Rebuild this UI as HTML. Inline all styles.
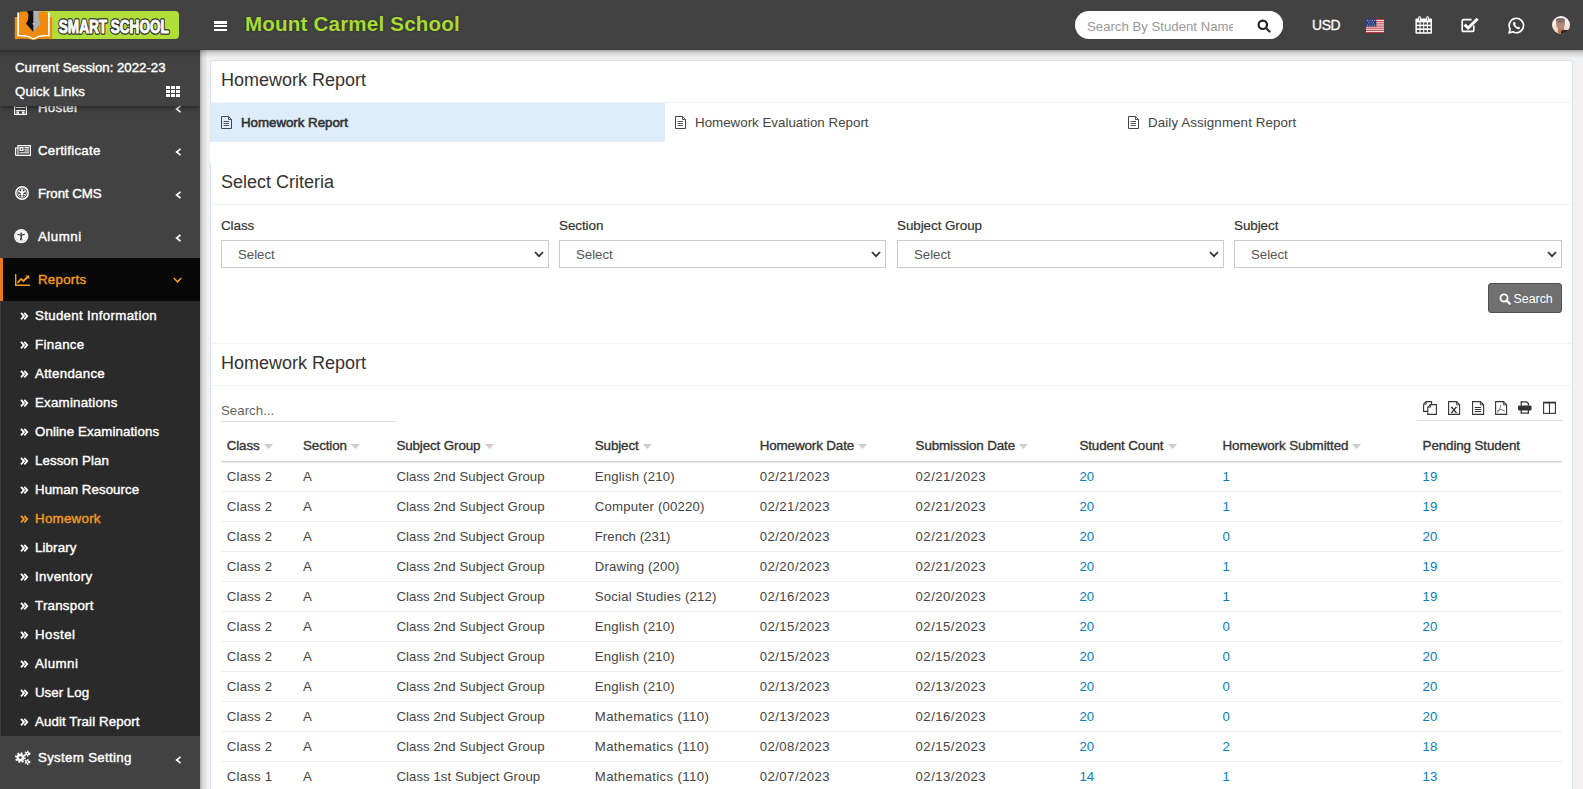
<!DOCTYPE html>
<html><head><meta charset="utf-8">
<style>
*{box-sizing:border-box;margin:0;padding:0}
html,body{width:1583px;height:789px;overflow:hidden}
body{background:#f1f1f1;font-family:"Liberation Sans",sans-serif;color:#444;position:relative}
.abs{position:absolute}
.t{position:absolute;white-space:nowrap}
svg{position:absolute;display:block;overflow:visible}
#hdr{position:absolute;left:0;top:0;width:1583px;height:50px;background:#424242;z-index:20}
#hdrsh{position:absolute;left:0;top:50px;width:1583px;height:8px;background:linear-gradient(rgba(0,0,0,.32),rgba(0,0,0,.12) 35%,rgba(0,0,0,0));z-index:19}
#side{position:absolute;left:0;top:50px;width:200px;height:739px;background:#424242;z-index:10;overflow:hidden}
#sdsh{position:absolute;left:200px;top:50px;width:8px;height:739px;background:linear-gradient(90deg,rgba(0,0,0,.28),rgba(0,0,0,.1) 35%,rgba(0,0,0,0));z-index:9}
#box{position:absolute;left:210px;top:60px;width:1363px;height:760px;background:#fff;border:1px solid #dbe3ec;border-radius:3px;z-index:1}
</style></head>
<body>
<div id="hdr">
<div class="abs" style="left:28px;top:11px;width:151px;height:28px;background:#b0dd3a;border-radius:4px;"></div>
<svg style="left:14px;top:10px" width="40" height="31" viewBox="0 0 40 31">
<path d="M0.8 7 H4 V26 H35 V7 H38.2 V29.2 Q28 27.8 19.5 30 Q10 27.8 0.8 29.2 Z" fill="#f28a0c"/>
<path d="M3.3 2.5 H5 V25 Q13 24 19.5 28 Q26 24 34 25 V2.5 H35.7 V26.5 Q27 25.5 19.5 29.6 Q12 25.5 3.3 26.5 Z" fill="#fff"/>
<path d="M5 3.5 Q5 1.5 8 1.5 H19.5 V28 Q13 24 5 25 Z" fill="#f28a0c"/>
<path d="M34 3.5 Q34 1.5 31 1.5 H19.5 V28 Q26 24 34 25 Z" fill="#f28a0c"/>
<path d="M13 1 H19.5 V22.5 L18.5 21 Q15 17 12 13.8 Q14.8 10 14.5 5 Z" fill="#111"/>
<path d="M19.5 1 H25.7 Q24.3 5 24.6 8 Q25.5 11 26.6 13.8 Q23 17 20.5 21 L19.5 22.5 Z" fill="#a9b1b5"/>
<path d="M19.5 4 V22" stroke="#6f7679" stroke-width="0.6"/>
<circle cx="19.5" cy="13.8" r="0.9" fill="#ddd"/>
</svg>
<svg style="left:57px;top:14px" width="118" height="22" viewBox="0 0 118 22"><text x="1.8" y="18.5" font-family="Liberation Sans" font-weight="bold" font-size="17.5" fill="#fff" stroke="#2e2e2e" stroke-width="3.4" stroke-linejoin="round" textLength="110" lengthAdjust="spacingAndGlyphs">SMART SCHOOL</text><text x="1.8" y="18.5" font-family="Liberation Sans" font-weight="bold" font-size="17.5" fill="#fff" stroke="#fff" stroke-width="0.9" stroke-linejoin="round" textLength="110" lengthAdjust="spacingAndGlyphs">SMART SCHOOL</text></svg>
<div class="abs" style="left:214px;top:21.4px;width:13px;height:2.3px;background:#fff;"></div>
<div class="abs" style="left:214px;top:25.2px;width:13px;height:2.3px;background:#fff;"></div>
<div class="abs" style="left:214px;top:29px;width:13px;height:2.3px;background:#fff;"></div>
<div class="t" style="left:245px;top:10.36px;font-size:20.6px;line-height:27px;color:#a8dc34;font-weight:bold;letter-spacing:0.17px;text-shadow:0 0 2px rgba(0,0,0,.5);">Mount Carmel School</div>
<div class="abs" style="left:1075px;top:11px;width:208px;height:28px;background:#fff;border-radius:14px;overflow:hidden">
<div class="t" style="left:12px;top:6.62px;font-size:13.2px;line-height:17px;color:#999;letter-spacing:0px;">Search By Student Name</div>
<div class="abs" style="left:158px;top:0px;width:50px;height:28px;background:#fff;"></div>
<svg style="left:182px;top:8px" width="14" height="14" viewBox="0 0 14 14"><circle cx="5.8" cy="5.8" r="4.2" fill="none" stroke="#222" stroke-width="2.2"/><path d="M9 9 L12.5 12.5" stroke="#333" stroke-width="2.4" stroke-linecap="round"/></svg>
</div>
<div class="t" style="left:1312px;top:16.38px;font-size:13.9px;line-height:18px;color:#fff;-webkit-text-stroke:0.3px #fff;letter-spacing:-0.35px;">USD</div>
<svg style="left:1366px;top:19px" width="18" height="14" viewBox="0 0 18 14">
<rect width="18" height="14" fill="#f2f2f2"/>
<g fill="#c23a42"><rect y="0" width="18" height="1.1"/><rect y="2.15" width="18" height="1.1"/><rect y="4.3" width="18" height="1.1"/><rect y="6.45" width="18" height="1.1"/><rect y="8.6" width="18" height="1.1"/><rect y="10.75" width="18" height="1.1"/><rect y="12.9" width="18" height="1.1"/></g>
<rect width="10.3" height="7.6" fill="#2c3f7c"/>
<g fill="#c9cfe0"><circle cx="1.5" cy="1.4" r="0.5"/><circle cx="3.9" cy="1.4" r="0.5"/><circle cx="6.3" cy="1.4" r="0.5"/><circle cx="8.7" cy="1.4" r="0.5"/><circle cx="2.7" cy="3.8" r="0.5"/><circle cx="5.1" cy="3.8" r="0.5"/><circle cx="7.5" cy="3.8" r="0.5"/><circle cx="1.5" cy="6.1" r="0.5"/><circle cx="3.9" cy="6.1" r="0.5"/><circle cx="6.3" cy="6.1" r="0.5"/><circle cx="8.7" cy="6.1" r="0.5"/></g>
</svg>
<svg style="left:1415px;top:16px" width="18" height="18" viewBox="0 0 18 18">
<rect x="0.4" y="2.6" width="16.6" height="15.2" rx="1" fill="#fff"/>
<g fill="#424242"><rect x="1.9" y="6.4" width="2.6" height="2.2"/><rect x="5.6" y="6.4" width="2.6" height="2.2"/><rect x="9.2" y="6.4" width="2.6" height="2.2"/><rect x="12.9" y="6.4" width="2.6" height="2.2"/>
<rect x="1.9" y="10.2" width="2.6" height="2.2"/><rect x="5.6" y="10.2" width="2.6" height="2.2"/><rect x="9.2" y="10.2" width="2.6" height="2.2"/><rect x="12.9" y="10.2" width="2.6" height="2.2"/>
<rect x="1.9" y="14" width="2.6" height="2.2"/><rect x="5.6" y="14" width="2.6" height="2.2"/><rect x="9.2" y="14" width="2.6" height="2.2"/><rect x="12.9" y="14" width="2.6" height="2.2"/></g>
<rect x="3.2" y="0.3" width="2.8" height="4.6" rx="1.4" fill="#fff"/><rect x="11.2" y="0.3" width="2.8" height="4.6" rx="1.4" fill="#fff"/>
<rect x="4.1" y="1.5" width="1" height="3" fill="#666"/><rect x="12.1" y="1.5" width="1" height="3" fill="#666"/>
</svg>
<svg style="left:1461px;top:17px" width="19" height="16" viewBox="0 0 19 16">
<path d="M12.8 8.5 V13 Q12.8 14.4 11.4 14.4 H2.6 Q1.2 14.4 1.2 13 V4 Q1.2 2.6 2.6 2.6 H10.5" fill="none" stroke="#fff" stroke-width="1.7"/>
<path d="M3.6 7.6 L7.2 11 L16.6 1.8" fill="none" stroke="#fff" stroke-width="3"/>
</svg>
<svg style="left:1508px;top:17px" width="17" height="17" viewBox="0 0 17 17">
<path d="M1 16 L2.2 12.3 A7.2 7.2 0 1 1 4.8 14.8 Z" fill="none" stroke="#fff" stroke-width="1.6" stroke-linejoin="round"/>
<path d="M5.6 5.2 Q6.3 4.4 6.9 5 L7.6 6.6 Q7.7 7.1 7.1 7.6 Q8 9.4 9.6 10.2 Q10.1 9.6 10.6 9.7 L12 10.4 Q12.4 11 11.6 11.8 Q10.6 12.6 8.6 11.5 Q5.8 9.8 5 7.3 Q4.8 6 5.6 5.2 Z" fill="#fff"/>
</svg>
<div class="abs" style="left:1552px;top:15.8px;width:18.4px;height:18.4px;border-radius:50%;overflow:hidden;background:linear-gradient(#fbfafa,#f7ece6 45%,#f0cfc8 80%,#c9dbe6)">
<div class="abs" style="left:6px;top:12px;width:6px;height:7px;background:#b07a58"></div>
<div class="abs" style="left:9px;top:14px;width:10px;height:6px;border-radius:40% 30% 0 0;background:#2a2220"></div>
<div class="abs" style="left:4.3px;top:2.6px;width:8.6px;height:11px;border-radius:45% 45% 48% 48%;background:#b48b7a"></div>
<div class="abs" style="left:4.3px;top:2.4px;width:8.6px;height:3.6px;border-radius:50% 50% 20% 20%;background:#857470"></div>
<div class="abs" style="left:5.5px;top:6.5px;width:6px;height:1.2px;background:#8a6455;opacity:.6"></div>
</div>
</div>
<div id="hdrsh"></div>
<div id="side">
<div class="t" style="left:38px;top:48.89px;font-size:13.3px;line-height:17px;color:#fff;-webkit-text-stroke:0.4px #fff;letter-spacing:0.25px;">Hostel</div>
<svg style="left:175px;top:55px" width="7" height="8" viewBox="0 0 7 8"><path d="M5.5 0.8 L1.6 4 L5.5 7.2" fill="none" stroke="#fff" stroke-width="1.7"/></svg>
<div class="t" style="left:38px;top:91.89px;font-size:13.3px;line-height:17px;color:#fff;-webkit-text-stroke:0.4px #fff;letter-spacing:0.25px;">Certificate</div>
<svg style="left:175px;top:98px" width="7" height="8" viewBox="0 0 7 8"><path d="M5.5 0.8 L1.6 4 L5.5 7.2" fill="none" stroke="#fff" stroke-width="1.7"/></svg>
<div class="t" style="left:38px;top:134.89px;font-size:13.3px;line-height:17px;color:#fff;-webkit-text-stroke:0.4px #fff;letter-spacing:-0.09000000000000002px;">Front CMS</div>
<svg style="left:175px;top:141px" width="7" height="8" viewBox="0 0 7 8"><path d="M5.5 0.8 L1.6 4 L5.5 7.2" fill="none" stroke="#fff" stroke-width="1.7"/></svg>
<div class="t" style="left:38px;top:177.89px;font-size:13.3px;line-height:17px;color:#fff;-webkit-text-stroke:0.4px #fff;letter-spacing:0.49px;">Alumni</div>
<svg style="left:175px;top:184px" width="7" height="8" viewBox="0 0 7 8"><path d="M5.5 0.8 L1.6 4 L5.5 7.2" fill="none" stroke="#fff" stroke-width="1.7"/></svg>
<svg style="left:14px;top:56px" width="13" height="9" viewBox="0 0 13 9"><rect x="0.6" y="-6" width="11.8" height="14.4" fill="none" stroke="#fff" stroke-width="1.2"/><rect x="2" y="4" width="9" height="1.2" fill="#fff"/><rect x="2.5" y="5.5" width="2.5" height="2.2" fill="#fff"/><rect x="8" y="5.5" width="2.5" height="2.2" fill="#fff"/><rect x="2" y="1" width="9" height="1" fill="#fff"/></svg>
<svg style="left:14.5px;top:94.5px" width="16" height="11" viewBox="0 0 16 11"><path d="M3 0.6 H15.4 V10.4 H1.5 Q0.6 10.4 0.6 9.4 V3 H3 Z" fill="none" stroke="#fff" stroke-width="1.2"/><path d="M3 3 V9.5" stroke="#fff" stroke-width="1"/><rect x="4.5" y="2" width="4" height="4" fill="#fff"/><rect x="5.7" y="3.2" width="1.6" height="1.6" fill="#424242"/><path d="M9.5 2.5h4.5M9.5 4.2h4.5M9.5 6h4.5M4.5 7.8h9.5" stroke="#fff" stroke-width="1"/></svg>
<svg style="left:14.5px;top:136px" width="14" height="14" viewBox="0 0 14 14"><circle cx="7" cy="7" r="6.2" fill="none" stroke="#fff" stroke-width="1.5"/><circle cx="7" cy="7" r="4.3" fill="none" stroke="#fff" stroke-width="0.7"/><g stroke="#fff" stroke-width="1.5" stroke-linecap="round"><path d="M7 3.6v6.8M4.05 5.3l5.9 3.4M4.05 8.7l5.9-3.4"/></g><circle cx="7" cy="7" r="1.4" fill="#fff"/></svg>
<svg style="left:14.3px;top:179px" width="14.4" height="14.4" viewBox="0 0 14.4 14.4"><circle cx="7.2" cy="7.2" r="7.1" fill="#fff"/><circle cx="7.2" cy="7.2" r="5.7" fill="none" stroke="#bbb" stroke-width="0.5"/><circle cx="7.2" cy="4.4" r="1" fill="#333"/><path d="M3.6 5.4 L7.2 6.2 L10.8 5.4" fill="none" stroke="#333" stroke-width="1.1"/><rect x="6.5" y="5.9" width="1.4" height="3.4" fill="#333"/><path d="M6.9 9 L6.2 11.5 M7.5 9 L8.2 11.5" stroke="#333" stroke-width="1"/></svg>
<div class="abs" style="left:0px;top:208px;width:200px;height:43px;background:#080808;"></div>
<div class="abs" style="left:0px;top:208px;width:3px;height:43px;background:#e8761a;"></div>
<svg style="left:15px;top:224px" width="16" height="12" viewBox="0 0 16 12"><path d="M0.7 0 V11.3 H15" fill="none" stroke="#f39c1f" stroke-width="1.4"/><path d="M2.5 9 L6 5 L8.5 7 L13 2.5" fill="none" stroke="#f39c1f" stroke-width="1.8"/><path d="M10.5 1.5 H14.3 V5.2 Z" fill="#f39c1f"/></svg>
<div class="t" style="left:38px;top:221.39px;font-size:13.3px;line-height:17px;color:#f39c1f;-webkit-text-stroke:0.4px #f39c1f;letter-spacing:0.25px;">Reports</div>
<svg style="left:173px;top:227px" width="9" height="6" viewBox="0 0 9 6"><path d="M0.8 1 L4.5 4.8 L8.2 1" fill="none" stroke="#f39c1f" stroke-width="1.5"/></svg>
<div class="abs" style="left:0px;top:251px;width:200px;height:435px;background:#2a2a2a;"></div>
<div class="abs" style="left:0px;top:251px;width:1px;height:435px;background:#3d3d3d;"></div>
<div class="t" style="left:35px;top:256.89px;font-size:13.3px;line-height:17px;color:#fff;-webkit-text-stroke:0.4px #fff;letter-spacing:0.317px;">Student Information</div>
<svg style="left:20.4px;top:262px" width="8" height="8" viewBox="0 0 8 8"><path d="M1 0.9 L3.9 4.1 L1 7.3 M4.3 0.9 L7.2 4.1 L4.3 7.3" fill="none" stroke="#fff" stroke-width="1.8"/></svg>
<div class="t" style="left:35px;top:285.89px;font-size:13.3px;line-height:17px;color:#fff;-webkit-text-stroke:0.4px #fff;letter-spacing:0.317px;">Finance</div>
<svg style="left:20.4px;top:291px" width="8" height="8" viewBox="0 0 8 8"><path d="M1 0.9 L3.9 4.1 L1 7.3 M4.3 0.9 L7.2 4.1 L4.3 7.3" fill="none" stroke="#fff" stroke-width="1.8"/></svg>
<div class="t" style="left:35px;top:314.89px;font-size:13.3px;line-height:17px;color:#fff;-webkit-text-stroke:0.4px #fff;letter-spacing:0.272px;">Attendance</div>
<svg style="left:20.4px;top:320px" width="8" height="8" viewBox="0 0 8 8"><path d="M1 0.9 L3.9 4.1 L1 7.3 M4.3 0.9 L7.2 4.1 L4.3 7.3" fill="none" stroke="#fff" stroke-width="1.8"/></svg>
<div class="t" style="left:35px;top:343.89px;font-size:13.3px;line-height:17px;color:#fff;-webkit-text-stroke:0.4px #fff;letter-spacing:0.232px;">Examinations</div>
<svg style="left:20.4px;top:349px" width="8" height="8" viewBox="0 0 8 8"><path d="M1 0.9 L3.9 4.1 L1 7.3 M4.3 0.9 L7.2 4.1 L4.3 7.3" fill="none" stroke="#fff" stroke-width="1.8"/></svg>
<div class="t" style="left:35px;top:372.89px;font-size:13.3px;line-height:17px;color:#fff;-webkit-text-stroke:0.4px #fff;letter-spacing:0.117px;">Online Examinations</div>
<svg style="left:20.4px;top:378px" width="8" height="8" viewBox="0 0 8 8"><path d="M1 0.9 L3.9 4.1 L1 7.3 M4.3 0.9 L7.2 4.1 L4.3 7.3" fill="none" stroke="#fff" stroke-width="1.8"/></svg>
<div class="t" style="left:35px;top:401.89px;font-size:13.3px;line-height:17px;color:#fff;-webkit-text-stroke:0.4px #fff;letter-spacing:0.07px;">Lesson Plan</div>
<svg style="left:20.4px;top:407px" width="8" height="8" viewBox="0 0 8 8"><path d="M1 0.9 L3.9 4.1 L1 7.3 M4.3 0.9 L7.2 4.1 L4.3 7.3" fill="none" stroke="#fff" stroke-width="1.8"/></svg>
<div class="t" style="left:35px;top:430.89px;font-size:13.3px;line-height:17px;color:#fff;-webkit-text-stroke:0.4px #fff;letter-spacing:0.05px;">Human Resource</div>
<svg style="left:20.4px;top:436px" width="8" height="8" viewBox="0 0 8 8"><path d="M1 0.9 L3.9 4.1 L1 7.3 M4.3 0.9 L7.2 4.1 L4.3 7.3" fill="none" stroke="#fff" stroke-width="1.8"/></svg>
<div class="t" style="left:35px;top:459.89px;font-size:13.3px;line-height:17px;color:#f39c1f;-webkit-text-stroke:0.4px #f39c1f;letter-spacing:0.279px;">Homework</div>
<svg style="left:20.4px;top:465px" width="8" height="8" viewBox="0 0 8 8"><path d="M1 0.9 L3.9 4.1 L1 7.3 M4.3 0.9 L7.2 4.1 L4.3 7.3" fill="none" stroke="#f39c1f" stroke-width="1.8"/></svg>
<div class="t" style="left:35px;top:488.89px;font-size:13.3px;line-height:17px;color:#fff;-webkit-text-stroke:0.4px #fff;letter-spacing:0.117px;">Library</div>
<svg style="left:20.4px;top:494px" width="8" height="8" viewBox="0 0 8 8"><path d="M1 0.9 L3.9 4.1 L1 7.3 M4.3 0.9 L7.2 4.1 L4.3 7.3" fill="none" stroke="#fff" stroke-width="1.8"/></svg>
<div class="t" style="left:35px;top:517.89px;font-size:13.3px;line-height:17px;color:#fff;-webkit-text-stroke:0.4px #fff;letter-spacing:0.3px;">Inventory</div>
<svg style="left:20.4px;top:523px" width="8" height="8" viewBox="0 0 8 8"><path d="M1 0.9 L3.9 4.1 L1 7.3 M4.3 0.9 L7.2 4.1 L4.3 7.3" fill="none" stroke="#fff" stroke-width="1.8"/></svg>
<div class="t" style="left:35px;top:546.89px;font-size:13.3px;line-height:17px;color:#fff;-webkit-text-stroke:0.4px #fff;letter-spacing:0.25px;">Transport</div>
<svg style="left:20.4px;top:552px" width="8" height="8" viewBox="0 0 8 8"><path d="M1 0.9 L3.9 4.1 L1 7.3 M4.3 0.9 L7.2 4.1 L4.3 7.3" fill="none" stroke="#fff" stroke-width="1.8"/></svg>
<div class="t" style="left:35px;top:575.89px;font-size:13.3px;line-height:17px;color:#fff;-webkit-text-stroke:0.4px #fff;letter-spacing:0.45px;">Hostel</div>
<svg style="left:20.4px;top:581px" width="8" height="8" viewBox="0 0 8 8"><path d="M1 0.9 L3.9 4.1 L1 7.3 M4.3 0.9 L7.2 4.1 L4.3 7.3" fill="none" stroke="#fff" stroke-width="1.8"/></svg>
<div class="t" style="left:35px;top:604.89px;font-size:13.3px;line-height:17px;color:#fff;-webkit-text-stroke:0.4px #fff;letter-spacing:0.45px;">Alumni</div>
<svg style="left:20.4px;top:610px" width="8" height="8" viewBox="0 0 8 8"><path d="M1 0.9 L3.9 4.1 L1 7.3 M4.3 0.9 L7.2 4.1 L4.3 7.3" fill="none" stroke="#fff" stroke-width="1.8"/></svg>
<div class="t" style="left:35px;top:633.89px;font-size:13.3px;line-height:17px;color:#fff;-webkit-text-stroke:0.4px #fff;letter-spacing:0.021px;">User Log</div>
<svg style="left:20.4px;top:639px" width="8" height="8" viewBox="0 0 8 8"><path d="M1 0.9 L3.9 4.1 L1 7.3 M4.3 0.9 L7.2 4.1 L4.3 7.3" fill="none" stroke="#fff" stroke-width="1.8"/></svg>
<div class="t" style="left:35px;top:662.89px;font-size:13.3px;line-height:17px;color:#fff;-webkit-text-stroke:0.4px #fff;letter-spacing:0.097px;">Audit Trail Report</div>
<svg style="left:20.4px;top:668px" width="8" height="8" viewBox="0 0 8 8"><path d="M1 0.9 L3.9 4.1 L1 7.3 M4.3 0.9 L7.2 4.1 L4.3 7.3" fill="none" stroke="#fff" stroke-width="1.8"/></svg>
<div class="t" style="left:38px;top:699.19px;font-size:13.3px;line-height:17px;color:#fff;-webkit-text-stroke:0.4px #fff;letter-spacing:0.3px;">System Setting</div>
<svg style="left:175px;top:706px" width="7" height="8" viewBox="0 0 7 8"><path d="M5.5 0.8 L1.6 4 L5.5 7.2" fill="none" stroke="#fff" stroke-width="1.7"/></svg>
<svg style="left:14.5px;top:700.5px" width="16" height="14" viewBox="0 0 16 14"><circle cx="5.3" cy="6.6" r="4.4" fill="none" stroke="#fff" stroke-width="2" stroke-dasharray="1.7 1.75"/><circle cx="5.3" cy="6.6" r="3.9" fill="#fff"/><circle cx="5.3" cy="6.6" r="1.4" fill="#424242"/><circle cx="12.4" cy="2.6" r="2.3" fill="none" stroke="#fff" stroke-width="1.4" stroke-dasharray="1.2 1.2"/><circle cx="12.4" cy="2.6" r="1.9" fill="#fff"/><circle cx="12.4" cy="2.6" r="0.7" fill="#424242"/><circle cx="12.4" cy="10.9" r="2.3" fill="none" stroke="#fff" stroke-width="1.4" stroke-dasharray="1.2 1.2"/><circle cx="12.4" cy="10.9" r="1.9" fill="#fff"/><circle cx="12.4" cy="10.9" r="0.7" fill="#424242"/></svg>
<div class="abs" style="left:0;top:0;width:200px;height:56px;background:#424242;box-shadow:0 2px 5px rgba(0,0,0,.45)">
<div class="t" style="left:15px;top:8.91px;font-size:13.25px;line-height:17px;color:#fff;-webkit-text-stroke:0.4px #fff;letter-spacing:-0.02px;">Current Session: 2022-23</div>
<div class="t" style="left:15px;top:32.89px;font-size:13.3px;line-height:17px;color:#fff;-webkit-text-stroke:0.4px #fff;letter-spacing:0.12px;">Quick Links</div>
<svg style="left:166px;top:36px" width="14" height="11" viewBox="0 0 14 11"><g fill="#fff"><rect x="0" y="0" width="4" height="3"/><rect x="5" y="0" width="4" height="3"/><rect x="10" y="0" width="4" height="3"/><rect x="0" y="4" width="4" height="3"/><rect x="5" y="4" width="4" height="3"/><rect x="10" y="4" width="4" height="3"/><rect x="0" y="8" width="4" height="3"/><rect x="5" y="8" width="4" height="3"/><rect x="10" y="8" width="4" height="3"/></g></svg>
</div>
</div>
<div id="sdsh"></div>
<div id="box">
<div class="t" style="left:10px;top:8.26px;font-size:18px;line-height:23px;color:#333;">Homework Report</div>
<div class="abs" style="left:0px;top:41px;width:1361px;height:1px;background:#f4f4f4;"></div>
<div class="abs" style="left:0px;top:42px;width:454px;height:39px;background:#deedfb;"></div>
<svg style="left:10px;top:55px" width="11" height="13" viewBox="0 0 11 13"><path d="M0.5 0.5 H7.6 L10.5 3.4 V12.5 H0.5 Z" fill="none" stroke="#444" stroke-width="1"/><path d="M7.5 0.5 V3.5 H10.5" fill="none" stroke="#444" stroke-width="0.9"/><path d="M2.6 5.5h5.4M2.6 7.5h5.4M2.6 9.5h5.4" stroke="#444" stroke-width="0.9"/></svg>
<div class="t" style="left:30px;top:52.89px;font-size:13.3px;line-height:17px;color:#333;-webkit-text-stroke:0.6px #333;letter-spacing:-0.02px;">Homework Report</div>
<svg style="left:464px;top:55px" width="11" height="13" viewBox="0 0 11 13"><path d="M0.5 0.5 H7.6 L10.5 3.4 V12.5 H0.5 Z" fill="none" stroke="#444" stroke-width="1"/><path d="M7.5 0.5 V3.5 H10.5" fill="none" stroke="#444" stroke-width="0.9"/><path d="M2.6 5.5h5.4M2.6 7.5h5.4M2.6 9.5h5.4" stroke="#444" stroke-width="0.9"/></svg>
<div class="t" style="left:484px;top:53.27px;font-size:13.35px;line-height:17px;color:#444;">Homework Evaluation Report</div>
<svg style="left:917px;top:55px" width="11" height="13" viewBox="0 0 11 13"><path d="M0.5 0.5 H7.6 L10.5 3.4 V12.5 H0.5 Z" fill="none" stroke="#444" stroke-width="1"/><path d="M7.5 0.5 V3.5 H10.5" fill="none" stroke="#444" stroke-width="0.9"/><path d="M2.6 5.5h5.4M2.6 7.5h5.4M2.6 9.5h5.4" stroke="#444" stroke-width="0.9"/></svg>
<div class="t" style="left:937px;top:53.27px;font-size:13.35px;line-height:17px;color:#444;letter-spacing:0.1px;">Daily Assignment Report</div>
<div class="t" style="left:10px;top:110.26px;font-size:18px;line-height:23px;color:#333;">Select Criteria</div>
<div class="abs" style="left:0px;top:143px;width:1361px;height:1px;background:#f4f4f4;"></div>
<div class="t" style="left:10px;top:155.85px;font-size:13.4px;line-height:17px;color:#333;-webkit-text-stroke:0.2px #333;letter-spacing:-0.05px;">Class</div>
<div class="abs" style="left:10px;top:179px;width:328px;height:28px;border:1px solid #ccc;background:#fff"></div>
<div class="t" style="left:27px;top:185.12px;font-size:13.2px;line-height:17px;color:#555;">Select</div>
<svg style="left:323px;top:190px" width="10" height="7" viewBox="0 0 10 7"><path d="M1 1 L5 5.2 L9 1" fill="none" stroke="#333" stroke-width="1.8"/></svg>
<div class="t" style="left:348px;top:155.85px;font-size:13.4px;line-height:17px;color:#333;-webkit-text-stroke:0.2px #333;letter-spacing:-0.05px;">Section</div>
<div class="abs" style="left:348px;top:179px;width:327px;height:28px;border:1px solid #ccc;background:#fff"></div>
<div class="t" style="left:365px;top:185.12px;font-size:13.2px;line-height:17px;color:#555;">Select</div>
<svg style="left:660px;top:190px" width="10" height="7" viewBox="0 0 10 7"><path d="M1 1 L5 5.2 L9 1" fill="none" stroke="#333" stroke-width="1.8"/></svg>
<div class="t" style="left:686px;top:155.85px;font-size:13.4px;line-height:17px;color:#333;-webkit-text-stroke:0.2px #333;letter-spacing:-0.05px;">Subject Group</div>
<div class="abs" style="left:686px;top:179px;width:327px;height:28px;border:1px solid #ccc;background:#fff"></div>
<div class="t" style="left:703px;top:185.12px;font-size:13.2px;line-height:17px;color:#555;">Select</div>
<svg style="left:998px;top:190px" width="10" height="7" viewBox="0 0 10 7"><path d="M1 1 L5 5.2 L9 1" fill="none" stroke="#333" stroke-width="1.8"/></svg>
<div class="t" style="left:1023px;top:155.85px;font-size:13.4px;line-height:17px;color:#333;-webkit-text-stroke:0.2px #333;letter-spacing:-0.05px;">Subject</div>
<div class="abs" style="left:1023px;top:179px;width:328px;height:28px;border:1px solid #ccc;background:#fff"></div>
<div class="t" style="left:1040px;top:185.12px;font-size:13.2px;line-height:17px;color:#555;">Select</div>
<svg style="left:1336px;top:190px" width="10" height="7" viewBox="0 0 10 7"><path d="M1 1 L5 5.2 L9 1" fill="none" stroke="#333" stroke-width="1.8"/></svg>
<div class="abs" style="left:1277px;top:222px;width:74px;height:30px;background:#707070;border:1px solid #505050;border-radius:3px"></div>
<svg style="left:1288px;top:232px" width="12" height="12" viewBox="0 0 12 12"><circle cx="5" cy="5" r="3.6" fill="none" stroke="#fff" stroke-width="1.8"/><path d="M7.6 7.6 L10.8 10.8" stroke="#fff" stroke-width="2.2" stroke-linecap="round"/></svg>
<div class="t" style="left:1302.5px;top:229.70px;font-size:12.4px;line-height:16px;color:#fff;">Search</div>
<div class="abs" style="left:0px;top:282px;width:1361px;height:1px;background:#f4f4f4;"></div>
<div class="t" style="left:10px;top:291.26px;font-size:18px;line-height:23px;color:#333;">Homework Report</div>
<div class="abs" style="left:0px;top:324px;width:1361px;height:1px;background:#f4f4f4;"></div>
<div class="t" style="left:10px;top:340.89px;font-size:13.3px;line-height:17px;color:#666;">Search...</div>
<div class="abs" style="left:10px;top:360px;width:175px;height:1px;background:#ddd;"></div>
<div class="abs" style="left:1206px;top:359px;width:145px;height:1px;background:#ddd;"></div>
<svg style="left:1212px;top:340px" width="14" height="14" viewBox="0 0 14 14"><path d="M0.6 3.2 L3.2 0.6 H8.6 V3.6" fill="none" stroke="#333" stroke-width="1.1"/><path d="M0.6 3.2 V10.4 H4.8" fill="none" stroke="#333" stroke-width="1.1"/><path d="M3.2 0.6 V3.2 H0.6" fill="none" stroke="#333" stroke-width="0.9"/><path d="M4.8 6.2 L7.6 3.6 H13.4 V13.4 H4.8 Z" fill="#fff" stroke="#333" stroke-width="1.1"/><path d="M7.6 3.6 V6.2 H4.8" fill="none" stroke="#333" stroke-width="0.9"/></svg>
<svg style="left:1237px;top:340px" width="14" height="14" viewBox="0 0 14 14"><path d="M0.6 0.6 H8.4 L11.6 3.8 V13.4 H0.6 Z" fill="none" stroke="#333" stroke-width="1.1"/><path d="M8.4 0.6 V3.8 H11.6" fill="none" stroke="#333" stroke-width="0.9"/><path d="M3.6 6.3 L8.2 11.6 M8.2 6.3 L3.6 11.6" stroke="#333" stroke-width="1.3"/><path d="M2.8 6.3h2.2M7.2 6.3h2.2M2.8 11.6h2.2M7.2 11.6h2.2" stroke="#333" stroke-width="0.8"/></svg>
<svg style="left:1261px;top:340px" width="14" height="14" viewBox="0 0 14 14"><path d="M0.6 0.6 H8.4 L11.6 3.8 V13.4 H0.6 Z" fill="none" stroke="#333" stroke-width="1.1"/><path d="M8.4 0.6 V3.8 H11.6" fill="none" stroke="#333" stroke-width="0.9"/><path d="M2.8 6.5h6.4M2.8 8.5h6.4M2.8 10.5h6.4" stroke="#333" stroke-width="1"/></svg>
<svg style="left:1284px;top:340px" width="14" height="14" viewBox="0 0 14 14"><path d="M0.6 0.6 H8.4 L11.6 3.8 V13.4 H0.6 Z" fill="none" stroke="#333" stroke-width="1.1"/><path d="M8.4 0.6 V3.8 H11.6" fill="none" stroke="#333" stroke-width="0.9"/><path d="M5.8 4 Q5.6 7.5 2.2 11.6 M5.8 8.3 Q8 9.6 10 10.2 M5.8 8.3 L2.5 9.8" fill="none" stroke="#555" stroke-width="0.8"/></svg>
<svg style="left:1307px;top:340px" width="14" height="14" viewBox="0 0 14 14"><path d="M3.2 4.5 V0.8 H8.6 L10.4 2.6 V4.5" fill="none" stroke="#333" stroke-width="1.3"/><rect x="0" y="4.6" width="13.6" height="4.8" rx="1.3" fill="#333"/><path d="M3.2 8.6 V12.2 H10.4 V8.6" fill="none" stroke="#333" stroke-width="1.3"/></svg>
<svg style="left:1332px;top:340px" width="14" height="14" viewBox="0 0 14 14"><rect x="0.6" y="1.4" width="11.8" height="11" fill="none" stroke="#333" stroke-width="1.1"/><rect x="0" y="0.8" width="13" height="1.7" fill="#333"/><path d="M6.5 1.4 V12.4" stroke="#333" stroke-width="1.1"/></svg>
<div class="t" style="left:15.699999999999989px;top:375.85px;font-size:13.4px;line-height:17px;color:#333;-webkit-text-stroke:0.35px #333;letter-spacing:-0.12px;">Class</div>
<svg style="left:52.6px;top:383px" width="9" height="5" viewBox="0 0 9 5"><path d="M0 0 H9 L4.5 5 Z" fill="#ccc"/></svg>
<div class="t" style="left:92px;top:375.85px;font-size:13.4px;line-height:17px;color:#333;-webkit-text-stroke:0.35px #333;letter-spacing:-0.12px;">Section</div>
<svg style="left:139.9px;top:383px" width="9" height="5" viewBox="0 0 9 5"><path d="M0 0 H9 L4.5 5 Z" fill="#ccc"/></svg>
<div class="t" style="left:185.39999999999998px;top:375.85px;font-size:13.4px;line-height:17px;color:#333;-webkit-text-stroke:0.35px #333;letter-spacing:-0.12px;">Subject Group</div>
<svg style="left:273.5px;top:383px" width="9" height="5" viewBox="0 0 9 5"><path d="M0 0 H9 L4.5 5 Z" fill="#ccc"/></svg>
<div class="t" style="left:383.79999999999995px;top:375.85px;font-size:13.4px;line-height:17px;color:#333;-webkit-text-stroke:0.35px #333;letter-spacing:-0.12px;">Subject</div>
<svg style="left:431.7px;top:383px" width="9" height="5" viewBox="0 0 9 5"><path d="M0 0 H9 L4.5 5 Z" fill="#ccc"/></svg>
<div class="t" style="left:548.7px;top:375.85px;font-size:13.4px;line-height:17px;color:#333;-webkit-text-stroke:0.35px #333;letter-spacing:-0.12px;">Homework Date</div>
<svg style="left:647.2px;top:383px" width="9" height="5" viewBox="0 0 9 5"><path d="M0 0 H9 L4.5 5 Z" fill="#ccc"/></svg>
<div class="t" style="left:704.6px;top:375.85px;font-size:13.4px;line-height:17px;color:#333;-webkit-text-stroke:0.35px #333;letter-spacing:-0.12px;">Submission Date</div>
<svg style="left:808.1px;top:383px" width="9" height="5" viewBox="0 0 9 5"><path d="M0 0 H9 L4.5 5 Z" fill="#ccc"/></svg>
<div class="t" style="left:868.4000000000001px;top:375.85px;font-size:13.4px;line-height:17px;color:#333;-webkit-text-stroke:0.35px #333;letter-spacing:-0.12px;">Student Count</div>
<svg style="left:956.5px;top:383px" width="9" height="5" viewBox="0 0 9 5"><path d="M0 0 H9 L4.5 5 Z" fill="#ccc"/></svg>
<div class="t" style="left:1011.5px;top:375.85px;font-size:13.4px;line-height:17px;color:#333;-webkit-text-stroke:0.35px #333;letter-spacing:-0.12px;">Homework Submitted</div>
<svg style="left:1141.4px;top:383px" width="9" height="5" viewBox="0 0 9 5"><path d="M0 0 H9 L4.5 5 Z" fill="#ccc"/></svg>
<div class="t" style="left:1211.6px;top:375.85px;font-size:13.4px;line-height:17px;color:#333;-webkit-text-stroke:0.35px #333;letter-spacing:-0.12px;">Pending Student</div>
<div class="abs" style="left:10px;top:400px;width:1341px;height:1px;background:#d6d6d6;"></div>
<div class="abs" style="left:10px;top:401px;width:1341px;height:1px;background:#ededed;"></div>
<div class="t" style="left:15.699999999999989px;top:406.92px;font-size:13.2px;line-height:17px;color:#444;letter-spacing:0.25px;">Class 2</div>
<div class="t" style="left:92px;top:406.92px;font-size:13.2px;line-height:17px;color:#444;letter-spacing:0px;">A</div>
<div class="t" style="left:185.39999999999998px;top:406.92px;font-size:13.2px;line-height:17px;color:#444;letter-spacing:0.07px;">Class 2nd Subject Group</div>
<div class="t" style="left:383.79999999999995px;top:406.92px;font-size:13.2px;line-height:17px;color:#444;letter-spacing:0.17px;">English (210)</div>
<div class="t" style="left:548.7px;top:406.92px;font-size:13.2px;line-height:17px;color:#444;letter-spacing:0.44px;">02/21/2023</div>
<div class="t" style="left:704.6px;top:406.92px;font-size:13.2px;line-height:17px;color:#444;letter-spacing:0.44px;">02/21/2023</div>
<div class="t" style="left:868.4000000000001px;top:406.92px;font-size:13.2px;line-height:17px;color:#0a7dbd;letter-spacing:0.15px;">20</div>
<div class="t" style="left:1011.5px;top:406.92px;font-size:13.2px;line-height:17px;color:#0a7dbd;letter-spacing:0.15px;">1</div>
<div class="t" style="left:1211.6px;top:406.92px;font-size:13.2px;line-height:17px;color:#0a7dbd;letter-spacing:0.15px;">19</div>
<div class="abs" style="left:10px;top:430px;width:1341px;height:1px;background:#eee;"></div>
<div class="t" style="left:15.699999999999989px;top:436.92px;font-size:13.2px;line-height:17px;color:#444;letter-spacing:0.25px;">Class 2</div>
<div class="t" style="left:92px;top:436.92px;font-size:13.2px;line-height:17px;color:#444;letter-spacing:0px;">A</div>
<div class="t" style="left:185.39999999999998px;top:436.92px;font-size:13.2px;line-height:17px;color:#444;letter-spacing:0.07px;">Class 2nd Subject Group</div>
<div class="t" style="left:383.79999999999995px;top:436.92px;font-size:13.2px;line-height:17px;color:#444;letter-spacing:0.18px;">Computer (00220)</div>
<div class="t" style="left:548.7px;top:436.92px;font-size:13.2px;line-height:17px;color:#444;letter-spacing:0.44px;">02/21/2023</div>
<div class="t" style="left:704.6px;top:436.92px;font-size:13.2px;line-height:17px;color:#444;letter-spacing:0.44px;">02/21/2023</div>
<div class="t" style="left:868.4000000000001px;top:436.92px;font-size:13.2px;line-height:17px;color:#0a7dbd;letter-spacing:0.15px;">20</div>
<div class="t" style="left:1011.5px;top:436.92px;font-size:13.2px;line-height:17px;color:#0a7dbd;letter-spacing:0.15px;">1</div>
<div class="t" style="left:1211.6px;top:436.92px;font-size:13.2px;line-height:17px;color:#0a7dbd;letter-spacing:0.15px;">19</div>
<div class="abs" style="left:10px;top:460px;width:1341px;height:1px;background:#eee;"></div>
<div class="t" style="left:15.699999999999989px;top:466.92px;font-size:13.2px;line-height:17px;color:#444;letter-spacing:0.25px;">Class 2</div>
<div class="t" style="left:92px;top:466.92px;font-size:13.2px;line-height:17px;color:#444;letter-spacing:0px;">A</div>
<div class="t" style="left:185.39999999999998px;top:466.92px;font-size:13.2px;line-height:17px;color:#444;letter-spacing:0.07px;">Class 2nd Subject Group</div>
<div class="t" style="left:383.79999999999995px;top:466.92px;font-size:13.2px;line-height:17px;color:#444;letter-spacing:0.02px;">French (231)</div>
<div class="t" style="left:548.7px;top:466.92px;font-size:13.2px;line-height:17px;color:#444;letter-spacing:0.44px;">02/20/2023</div>
<div class="t" style="left:704.6px;top:466.92px;font-size:13.2px;line-height:17px;color:#444;letter-spacing:0.44px;">02/21/2023</div>
<div class="t" style="left:868.4000000000001px;top:466.92px;font-size:13.2px;line-height:17px;color:#0a7dbd;letter-spacing:0.15px;">20</div>
<div class="t" style="left:1011.5px;top:466.92px;font-size:13.2px;line-height:17px;color:#0a7dbd;letter-spacing:0.15px;">0</div>
<div class="t" style="left:1211.6px;top:466.92px;font-size:13.2px;line-height:17px;color:#0a7dbd;letter-spacing:0.15px;">20</div>
<div class="abs" style="left:10px;top:490px;width:1341px;height:1px;background:#eee;"></div>
<div class="t" style="left:15.699999999999989px;top:496.92px;font-size:13.2px;line-height:17px;color:#444;letter-spacing:0.25px;">Class 2</div>
<div class="t" style="left:92px;top:496.92px;font-size:13.2px;line-height:17px;color:#444;letter-spacing:0px;">A</div>
<div class="t" style="left:185.39999999999998px;top:496.92px;font-size:13.2px;line-height:17px;color:#444;letter-spacing:0.07px;">Class 2nd Subject Group</div>
<div class="t" style="left:383.79999999999995px;top:496.92px;font-size:13.2px;line-height:17px;color:#444;letter-spacing:0.15px;">Drawing (200)</div>
<div class="t" style="left:548.7px;top:496.92px;font-size:13.2px;line-height:17px;color:#444;letter-spacing:0.44px;">02/20/2023</div>
<div class="t" style="left:704.6px;top:496.92px;font-size:13.2px;line-height:17px;color:#444;letter-spacing:0.44px;">02/21/2023</div>
<div class="t" style="left:868.4000000000001px;top:496.92px;font-size:13.2px;line-height:17px;color:#0a7dbd;letter-spacing:0.15px;">20</div>
<div class="t" style="left:1011.5px;top:496.92px;font-size:13.2px;line-height:17px;color:#0a7dbd;letter-spacing:0.15px;">1</div>
<div class="t" style="left:1211.6px;top:496.92px;font-size:13.2px;line-height:17px;color:#0a7dbd;letter-spacing:0.15px;">19</div>
<div class="abs" style="left:10px;top:520px;width:1341px;height:1px;background:#eee;"></div>
<div class="t" style="left:15.699999999999989px;top:526.92px;font-size:13.2px;line-height:17px;color:#444;letter-spacing:0.25px;">Class 2</div>
<div class="t" style="left:92px;top:526.92px;font-size:13.2px;line-height:17px;color:#444;letter-spacing:0px;">A</div>
<div class="t" style="left:185.39999999999998px;top:526.92px;font-size:13.2px;line-height:17px;color:#444;letter-spacing:0.07px;">Class 2nd Subject Group</div>
<div class="t" style="left:383.79999999999995px;top:526.92px;font-size:13.2px;line-height:17px;color:#444;letter-spacing:0.19px;">Social Studies (212)</div>
<div class="t" style="left:548.7px;top:526.92px;font-size:13.2px;line-height:17px;color:#444;letter-spacing:0.44px;">02/16/2023</div>
<div class="t" style="left:704.6px;top:526.92px;font-size:13.2px;line-height:17px;color:#444;letter-spacing:0.44px;">02/20/2023</div>
<div class="t" style="left:868.4000000000001px;top:526.92px;font-size:13.2px;line-height:17px;color:#0a7dbd;letter-spacing:0.15px;">20</div>
<div class="t" style="left:1011.5px;top:526.92px;font-size:13.2px;line-height:17px;color:#0a7dbd;letter-spacing:0.15px;">1</div>
<div class="t" style="left:1211.6px;top:526.92px;font-size:13.2px;line-height:17px;color:#0a7dbd;letter-spacing:0.15px;">19</div>
<div class="abs" style="left:10px;top:550px;width:1341px;height:1px;background:#eee;"></div>
<div class="t" style="left:15.699999999999989px;top:556.92px;font-size:13.2px;line-height:17px;color:#444;letter-spacing:0.25px;">Class 2</div>
<div class="t" style="left:92px;top:556.92px;font-size:13.2px;line-height:17px;color:#444;letter-spacing:0px;">A</div>
<div class="t" style="left:185.39999999999998px;top:556.92px;font-size:13.2px;line-height:17px;color:#444;letter-spacing:0.07px;">Class 2nd Subject Group</div>
<div class="t" style="left:383.79999999999995px;top:556.92px;font-size:13.2px;line-height:17px;color:#444;letter-spacing:0.17px;">English (210)</div>
<div class="t" style="left:548.7px;top:556.92px;font-size:13.2px;line-height:17px;color:#444;letter-spacing:0.44px;">02/15/2023</div>
<div class="t" style="left:704.6px;top:556.92px;font-size:13.2px;line-height:17px;color:#444;letter-spacing:0.44px;">02/15/2023</div>
<div class="t" style="left:868.4000000000001px;top:556.92px;font-size:13.2px;line-height:17px;color:#0a7dbd;letter-spacing:0.15px;">20</div>
<div class="t" style="left:1011.5px;top:556.92px;font-size:13.2px;line-height:17px;color:#0a7dbd;letter-spacing:0.15px;">0</div>
<div class="t" style="left:1211.6px;top:556.92px;font-size:13.2px;line-height:17px;color:#0a7dbd;letter-spacing:0.15px;">20</div>
<div class="abs" style="left:10px;top:580px;width:1341px;height:1px;background:#eee;"></div>
<div class="t" style="left:15.699999999999989px;top:586.92px;font-size:13.2px;line-height:17px;color:#444;letter-spacing:0.25px;">Class 2</div>
<div class="t" style="left:92px;top:586.92px;font-size:13.2px;line-height:17px;color:#444;letter-spacing:0px;">A</div>
<div class="t" style="left:185.39999999999998px;top:586.92px;font-size:13.2px;line-height:17px;color:#444;letter-spacing:0.07px;">Class 2nd Subject Group</div>
<div class="t" style="left:383.79999999999995px;top:586.92px;font-size:13.2px;line-height:17px;color:#444;letter-spacing:0.17px;">English (210)</div>
<div class="t" style="left:548.7px;top:586.92px;font-size:13.2px;line-height:17px;color:#444;letter-spacing:0.44px;">02/15/2023</div>
<div class="t" style="left:704.6px;top:586.92px;font-size:13.2px;line-height:17px;color:#444;letter-spacing:0.44px;">02/15/2023</div>
<div class="t" style="left:868.4000000000001px;top:586.92px;font-size:13.2px;line-height:17px;color:#0a7dbd;letter-spacing:0.15px;">20</div>
<div class="t" style="left:1011.5px;top:586.92px;font-size:13.2px;line-height:17px;color:#0a7dbd;letter-spacing:0.15px;">0</div>
<div class="t" style="left:1211.6px;top:586.92px;font-size:13.2px;line-height:17px;color:#0a7dbd;letter-spacing:0.15px;">20</div>
<div class="abs" style="left:10px;top:610px;width:1341px;height:1px;background:#eee;"></div>
<div class="t" style="left:15.699999999999989px;top:616.92px;font-size:13.2px;line-height:17px;color:#444;letter-spacing:0.25px;">Class 2</div>
<div class="t" style="left:92px;top:616.92px;font-size:13.2px;line-height:17px;color:#444;letter-spacing:0px;">A</div>
<div class="t" style="left:185.39999999999998px;top:616.92px;font-size:13.2px;line-height:17px;color:#444;letter-spacing:0.07px;">Class 2nd Subject Group</div>
<div class="t" style="left:383.79999999999995px;top:616.92px;font-size:13.2px;line-height:17px;color:#444;letter-spacing:0.17px;">English (210)</div>
<div class="t" style="left:548.7px;top:616.92px;font-size:13.2px;line-height:17px;color:#444;letter-spacing:0.44px;">02/13/2023</div>
<div class="t" style="left:704.6px;top:616.92px;font-size:13.2px;line-height:17px;color:#444;letter-spacing:0.44px;">02/13/2023</div>
<div class="t" style="left:868.4000000000001px;top:616.92px;font-size:13.2px;line-height:17px;color:#0a7dbd;letter-spacing:0.15px;">20</div>
<div class="t" style="left:1011.5px;top:616.92px;font-size:13.2px;line-height:17px;color:#0a7dbd;letter-spacing:0.15px;">0</div>
<div class="t" style="left:1211.6px;top:616.92px;font-size:13.2px;line-height:17px;color:#0a7dbd;letter-spacing:0.15px;">20</div>
<div class="abs" style="left:10px;top:640px;width:1341px;height:1px;background:#eee;"></div>
<div class="t" style="left:15.699999999999989px;top:646.92px;font-size:13.2px;line-height:17px;color:#444;letter-spacing:0.25px;">Class 2</div>
<div class="t" style="left:92px;top:646.92px;font-size:13.2px;line-height:17px;color:#444;letter-spacing:0px;">A</div>
<div class="t" style="left:185.39999999999998px;top:646.92px;font-size:13.2px;line-height:17px;color:#444;letter-spacing:0.07px;">Class 2nd Subject Group</div>
<div class="t" style="left:383.79999999999995px;top:646.92px;font-size:13.2px;line-height:17px;color:#444;letter-spacing:0.36px;">Mathematics (110)</div>
<div class="t" style="left:548.7px;top:646.92px;font-size:13.2px;line-height:17px;color:#444;letter-spacing:0.44px;">02/13/2023</div>
<div class="t" style="left:704.6px;top:646.92px;font-size:13.2px;line-height:17px;color:#444;letter-spacing:0.44px;">02/16/2023</div>
<div class="t" style="left:868.4000000000001px;top:646.92px;font-size:13.2px;line-height:17px;color:#0a7dbd;letter-spacing:0.15px;">20</div>
<div class="t" style="left:1011.5px;top:646.92px;font-size:13.2px;line-height:17px;color:#0a7dbd;letter-spacing:0.15px;">0</div>
<div class="t" style="left:1211.6px;top:646.92px;font-size:13.2px;line-height:17px;color:#0a7dbd;letter-spacing:0.15px;">20</div>
<div class="abs" style="left:10px;top:670px;width:1341px;height:1px;background:#eee;"></div>
<div class="t" style="left:15.699999999999989px;top:676.92px;font-size:13.2px;line-height:17px;color:#444;letter-spacing:0.25px;">Class 2</div>
<div class="t" style="left:92px;top:676.92px;font-size:13.2px;line-height:17px;color:#444;letter-spacing:0px;">A</div>
<div class="t" style="left:185.39999999999998px;top:676.92px;font-size:13.2px;line-height:17px;color:#444;letter-spacing:0.07px;">Class 2nd Subject Group</div>
<div class="t" style="left:383.79999999999995px;top:676.92px;font-size:13.2px;line-height:17px;color:#444;letter-spacing:0.36px;">Mathematics (110)</div>
<div class="t" style="left:548.7px;top:676.92px;font-size:13.2px;line-height:17px;color:#444;letter-spacing:0.44px;">02/08/2023</div>
<div class="t" style="left:704.6px;top:676.92px;font-size:13.2px;line-height:17px;color:#444;letter-spacing:0.44px;">02/15/2023</div>
<div class="t" style="left:868.4000000000001px;top:676.92px;font-size:13.2px;line-height:17px;color:#0a7dbd;letter-spacing:0.15px;">20</div>
<div class="t" style="left:1011.5px;top:676.92px;font-size:13.2px;line-height:17px;color:#0a7dbd;letter-spacing:0.15px;">2</div>
<div class="t" style="left:1211.6px;top:676.92px;font-size:13.2px;line-height:17px;color:#0a7dbd;letter-spacing:0.15px;">18</div>
<div class="abs" style="left:10px;top:700px;width:1341px;height:1px;background:#eee;"></div>
<div class="t" style="left:15.699999999999989px;top:706.92px;font-size:13.2px;line-height:17px;color:#444;letter-spacing:0.25px;">Class 1</div>
<div class="t" style="left:92px;top:706.92px;font-size:13.2px;line-height:17px;color:#444;letter-spacing:0px;">A</div>
<div class="t" style="left:185.39999999999998px;top:706.92px;font-size:13.2px;line-height:17px;color:#444;letter-spacing:0.07px;">Class 1st Subject Group</div>
<div class="t" style="left:383.79999999999995px;top:706.92px;font-size:13.2px;line-height:17px;color:#444;letter-spacing:0.36px;">Mathematics (110)</div>
<div class="t" style="left:548.7px;top:706.92px;font-size:13.2px;line-height:17px;color:#444;letter-spacing:0.44px;">02/07/2023</div>
<div class="t" style="left:704.6px;top:706.92px;font-size:13.2px;line-height:17px;color:#444;letter-spacing:0.44px;">02/13/2023</div>
<div class="t" style="left:868.4000000000001px;top:706.92px;font-size:13.2px;line-height:17px;color:#0a7dbd;letter-spacing:0.15px;">14</div>
<div class="t" style="left:1011.5px;top:706.92px;font-size:13.2px;line-height:17px;color:#0a7dbd;letter-spacing:0.15px;">1</div>
<div class="t" style="left:1211.6px;top:706.92px;font-size:13.2px;line-height:17px;color:#0a7dbd;letter-spacing:0.15px;">13</div>
</div>
<div class="abs" style="left:210px;top:142px;width:1px;height:21px;background:#fff;z-index:2;"></div>
</body></html>
